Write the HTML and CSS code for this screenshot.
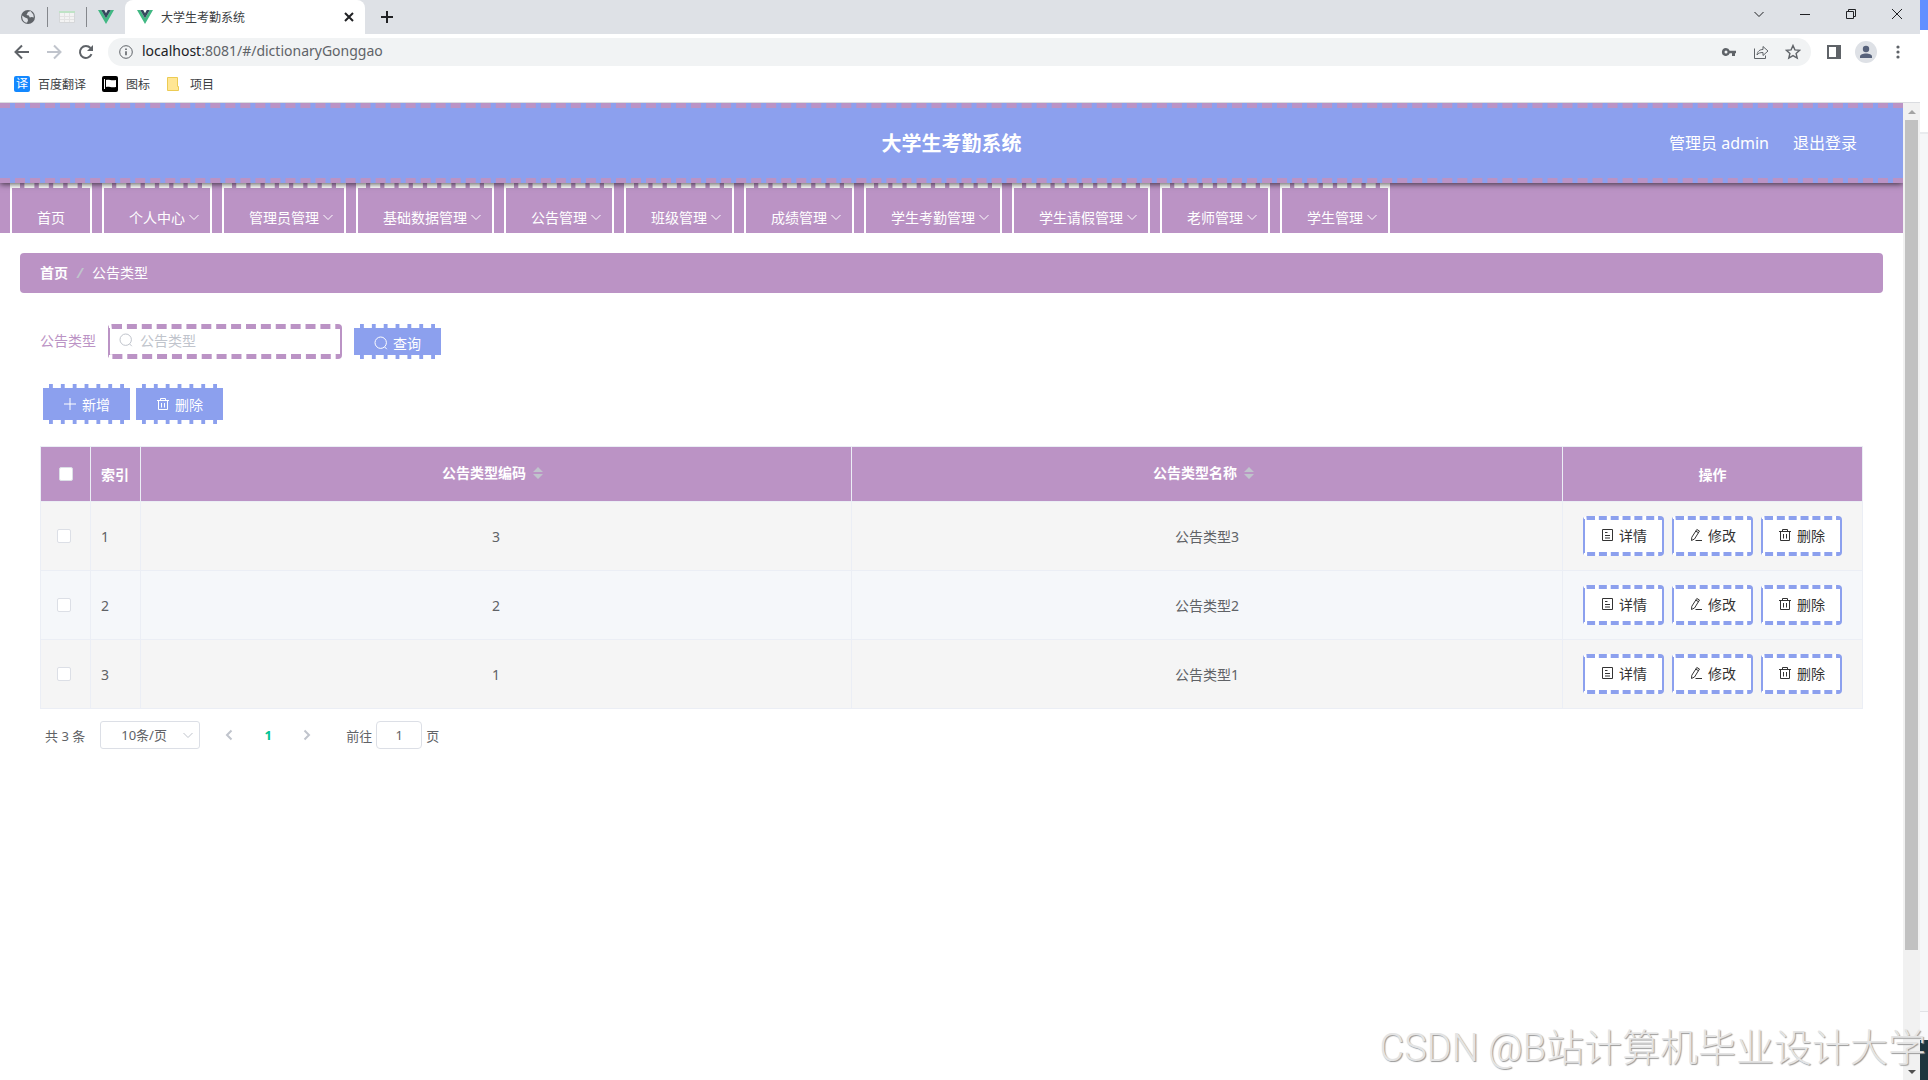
FILE: index.html
```
<!DOCTYPE html>
<html lang="zh-CN">
<head>
  <meta charset="UTF-8">
  <meta name="viewport" content="width=device-width, initial-scale=1.0">
  <title>大学生考勤系统</title>
  <link rel="stylesheet" href="styles.css">
</head>
<body>
  <!-- 图标 -->
  <svg class="symbols" aria-hidden="true">
    <symbol id="i-vue" viewBox="0 0 16 14">
      <path fill="#41b883" d="M0 0h3.2L8 8.3 12.8 0H16L8 14z"/>
      <path fill="#35495e" d="M3.2 0h3L8 3.2 9.8 0h3L8 8.3z"/>
    </symbol>
    <symbol id="i-down" viewBox="0 0 12 12"><path d="M1.5 4 6 8.5 10.5 4"/></symbol>
    <symbol id="i-left" viewBox="0 0 12 12"><path d="M8.500 1.500 4 6l4.500 4.500"/></symbol>
    <symbol id="i-right" viewBox="0 0 12 12"><path d="M3.500 1.500 8 6l-4.500 4.500"/></symbol>
    <symbol id="i-close" viewBox="0 0 12 12"><path d="M2 2l8 8M10 2l-8 8"/></symbol>
    <symbol id="i-search" viewBox="0 0 14 14"><circle cx="6.700" cy="6.700" r="5.700"/><path d="M10.600 10.900 12.800 13.200"/></symbol>
    <symbol id="i-plus" viewBox="0 0 14 14"><path d="M7 1v12M1 7h12"/></symbol>
    <symbol id="i-trash" viewBox="0 0 14 14"><path d="M1 3.500h12M4.500 3.500v-2h5v2M2.500 3.500v9h9v-9M5.500 6v4.500M8.500 6v4.500"/></symbol>
    <symbol id="i-doc" viewBox="0 0 14 14"><path d="M2.500 1.500h10v11h-10zM5 4.500h2.500M5 7.500h5M5 10h5"/></symbol>
    <symbol id="i-edit" viewBox="0 0 14 14"><path d="M7.800 1.500 10.500 3 5.500 11 2.500 12.500 2.800 9.300zM6.800 3.200 9.500 4.700M6.500 12.500h6.500"/></symbol>
  </svg>

  <div class="screen">
    <div class="browser">
      <!-- 标签栏 -->
      <div class="tab-strip">
        <svg class="tab-icon" viewBox="0 0 16 16"><circle cx="8" cy="8" r="7" fill="#5f6368"/><path fill="#dee1e6" d="M2.200 6.500 5 8.500l2.500 1 .5 2-1 2.300C4 13.500 2 11 2.200 6.500zM8 3l2.500-1 2.800 3.500.5 3-2-.5-2 .5-1-2-2.300-.5z"/></svg>
        <span class="tab-line"></span>
        <svg class="tab-icon" viewBox="0 0 16 16"><path fill="#f3f3f3" stroke="#d5d7d9" d="M.5 2.500h15v11H.5z"/><path fill="#bfe3c6" d="M0 2h16v2H0z"/><path stroke="#e3e3e3" d="M1 7.500h14M1 10.500h14M5.500 4v9M10.500 4v9"/></svg>
        <span class="tab-line"></span>
        <svg class="tab-icon"><use href="#i-vue"/></svg>
        <div class="tab">
          <svg class="tab-icon"><use href="#i-vue"/></svg>
          <span class="tab-title">大学生考勤系统</span>
          <button class="plain" aria-label="关闭标签"><svg class="line bold s12"><use href="#i-close"/></svg></button>
        </div>
        <button class="plain new-tab" aria-label="新标签"><svg class="line bold s14"><use href="#i-plus"/></svg></button>
        <div class="window-buttons">
          <button class="plain" aria-label="搜索标签"><svg class="line s12"><use href="#i-down"/></svg></button>
          <button class="plain" aria-label="最小化"><svg class="line s12" viewBox="0 0 12 12"><path d="M1 6.500h10"/></svg></button>
          <button class="plain" aria-label="还原"><svg class="line s12" viewBox="0 0 12 12"><path d="M1.500 3.500h7v7h-7zM3.500 3.500v-2h7v7h-2"/></svg></button>
          <button class="plain" aria-label="关闭"><svg class="line s12" viewBox="0 0 12 12"><path d="M1 1l10 10M11 1 1 11"/></svg></button>
        </div>
      </div>

      <!-- 地址栏 -->
      <div class="toolbar">
        <button class="plain" aria-label="后退"><svg class="line bold s16" viewBox="0 0 16 16"><path d="M15 8H2M8 1.500 1.500 8 8 14.500"/></svg></button>
        <button class="plain off" aria-label="前进"><svg class="line bold s16" viewBox="0 0 16 16"><path d="M1 8h13M8 1.500 14.500 8 8 14.500"/></svg></button>
        <button class="plain" aria-label="刷新"><svg class="line bold s16" viewBox="0 0 16 16"><path d="M13.500 10.200A6 6 0 1 1 12.500 4"/><path fill="currentColor" stroke="none" d="M15 1v6H9z"/></svg></button>
        <div class="address">
          <svg class="line s14" viewBox="0 0 14 14"><circle cx="7" cy="7" r="6.300"/><path stroke-width="1.600" d="M7 6.200v4M7 3.500v1.500"/></svg>
          <span class="url"><b>localhost</b>:8081/#/dictionaryGonggao</span>
          <button class="plain" aria-label="密码"><svg class="s16" viewBox="0 0 16 16"><path fill="currentColor" fill-rule="evenodd" d="M5 4a4 4 0 1 0 3.700 5.300H11V12h3V9.300h1V6.700H8.700A4 4 0 0 0 5 4zm0 2.500a1.500 1.500 0 1 1 0 3 1.500 1.500 0 0 1 0-3z"/></svg></button>
          <button class="plain" aria-label="分享"><svg class="line s16" viewBox="0 0 16 16"><path d="M1.500 4.500v10h11v-3M4 11c.5-4 3-5.500 6-5.500v-3l5 4.500-5 4.500v-3c-3 0-4.500.5-6 2.500z"/></svg></button>
          <button class="plain" aria-label="收藏"><svg class="line s16" viewBox="0 0 16 16"><path stroke-width="1.400" d="M8 1.500l1.900 4.400 4.800.4-3.600 3.100 1.100 4.700L8 11.600l-4.200 2.500 1.100-4.700L1.300 6.300l4.800-.4z"/></svg></button>
        </div>
        <div class="tools">
          <button class="plain" aria-label="侧边栏"><svg class="s14" viewBox="0 0 14 14"><path fill="currentColor" fill-rule="evenodd" d="M0 0h14v14H0zM2 2v10h7V2z"/></svg></button>
          <button class="plain avatar" aria-label="用户"><svg class="s14" viewBox="0 0 14 14"><circle cx="7" cy="4" r="3.200" fill="currentColor"/><path fill="currentColor" d="M1 13v-1.500C1 9.500 4 8.500 7 8.500s6 1 6 3V13z"/></svg></button>
          <button class="plain" aria-label="菜单"><svg class="s14" viewBox="0 0 14 14"><g fill="currentColor"><circle cx="7" cy="2" r="1.600"/><circle cx="7" cy="7" r="1.600"/><circle cx="7" cy="12" r="1.600"/></g></svg></button>
        </div>
      </div>

      <!-- 书签栏 -->
      <div class="bookmarks">
        <a href="#"><span class="bm-icon bm-blue">译</span>百度翻译</a>
        <a href="#"><svg class="s16" viewBox="0 0 16 16"><rect width="16" height="16" rx="2"/><path fill="#fff" d="M2 3h1v10H2zM4 4c3-1 5 1 10 0v7c-5 1-7-1-10 0z"/></svg>图标</a>
        <a href="#"><svg class="s16" viewBox="0 0 16 16"><path fill="#ffe694" stroke="#eccb53" d="M1.500 1.500h10v9h1v4h-11z"/></svg>项目</a>
      </div>

      <div class="viewport">
        <div class="page">
          <header class="header">
            <h1>大学生考勤系统</h1>
            <div class="user">
              <span>管理员 admin</span>
              <a href="#">退出登录</a>
            </div>
          </header>

          <nav class="menu">
            <a href="#" class="home">首页</a>
            <a href="#">个人中心<svg class="line s12"><use href="#i-down"/></svg></a>
            <a href="#">管理员管理<svg class="line s12"><use href="#i-down"/></svg></a>
            <a href="#">基础数据管理<svg class="line s12"><use href="#i-down"/></svg></a>
            <a href="#">公告管理<svg class="line s12"><use href="#i-down"/></svg></a>
            <a href="#">班级管理<svg class="line s12"><use href="#i-down"/></svg></a>
            <a href="#">成绩管理<svg class="line s12"><use href="#i-down"/></svg></a>
            <a href="#">学生考勤管理<svg class="line s12"><use href="#i-down"/></svg></a>
            <a href="#">学生请假管理<svg class="line s12"><use href="#i-down"/></svg></a>
            <a href="#">老师管理<svg class="line s12"><use href="#i-down"/></svg></a>
            <a href="#">学生管理<svg class="line s12"><use href="#i-down"/></svg></a>
          </nav>

          <main class="main">
            <div class="breadcrumb">
              <a href="#">首页</a><i>/</i><span>公告类型</span>
            </div>

            <div class="content">
              <form class="search">
                <label for="type">公告类型</label>
                <div class="search-box">
                  <svg class="line s14"><use href="#i-search"/></svg>
                  <input type="text" id="type" placeholder="公告类型">
                </div>
                <button type="button" class="btn btn-query"><svg class="line s14"><use href="#i-search"/></svg>查询</button>
              </form>

              <div class="actions">
                <button class="btn"><svg class="line s14"><use href="#i-plus"/></svg>新增</button>
                <button class="btn"><svg class="line s14"><use href="#i-trash"/></svg>删除</button>
              </div>

              <table class="table">
                <colgroup>
                  <col class="col-small"><col class="col-small"><col><col><col class="col-ops">
                </colgroup>
                <thead>
                  <tr>
                    <th><input type="checkbox" aria-label="全选"></th>
                    <th class="index">索引</th>
                    <th class="sortable">公告类型编码<svg class="caret" viewBox="0 0 10 12"><path d="M0 5l5-5 5 5zM0 7h10l-5 5z"/></svg></th>
                    <th class="sortable">公告类型名称<svg class="caret" viewBox="0 0 10 12"><path d="M0 5l5-5 5 5zM0 7h10l-5 5z"/></svg></th>
                    <th>操作</th>
                  </tr>
                </thead>
                <tbody>
                  <tr>
                    <td class="check"><input type="checkbox" aria-label="选择第1行"></td>
                    <td class="index">1</td>
                    <td>3</td>
                    <td>公告类型3</td>
                    <td>
                      <div class="ops">
                        <button><svg class="line s14"><use href="#i-doc"/></svg>详情</button>
                        <button><svg class="line s14"><use href="#i-edit"/></svg>修改</button>
                        <button><svg class="line s14"><use href="#i-trash"/></svg>删除</button>
                      </div>
                    </td>
                  </tr>
                  <tr>
                    <td class="check"><input type="checkbox" aria-label="选择第2行"></td>
                    <td class="index">2</td>
                    <td>2</td>
                    <td>公告类型2</td>
                    <td>
                      <div class="ops">
                        <button><svg class="line s14"><use href="#i-doc"/></svg>详情</button>
                        <button><svg class="line s14"><use href="#i-edit"/></svg>修改</button>
                        <button><svg class="line s14"><use href="#i-trash"/></svg>删除</button>
                      </div>
                    </td>
                  </tr>
                  <tr>
                    <td class="check"><input type="checkbox" aria-label="选择第3行"></td>
                    <td class="index">3</td>
                    <td>1</td>
                    <td>公告类型1</td>
                    <td>
                      <div class="ops">
                        <button><svg class="line s14"><use href="#i-doc"/></svg>详情</button>
                        <button><svg class="line s14"><use href="#i-edit"/></svg>修改</button>
                        <button><svg class="line s14"><use href="#i-trash"/></svg>删除</button>
                      </div>
                    </td>
                  </tr>
                </tbody>
              </table>

              <div class="pagination">
                <span class="total">共 3 条</span>
                <div class="page-size">
                  <select aria-label="每页条数">
                    <option>10条/页</option>
                    <option>20条/页</option>
                  </select>
                  <svg class="line s12"><use href="#i-down"/></svg>
                </div>
                <button class="pager off" aria-label="上一页"><svg class="line bold s12"><use href="#i-left"/></svg></button>
                <button class="pager current">1</button>
                <button class="pager off" aria-label="下一页"><svg class="line bold s12"><use href="#i-right"/></svg></button>
                <label class="jump" for="jump">前往</label>
                <input type="text" id="jump" value="1">
                <span>页</span>
              </div>
            </div>
          </main>
        </div>

        <!-- 滚动条 -->
        <div class="scrollbar">
          <svg viewBox="0 0 17 17"><path fill="#a3a3a3" d="M5 11l4-4 4 4z"/></svg>
          <div class="track"><div class="thumb"></div></div>
          <svg viewBox="0 0 17 17"><path fill="#505050" d="M5 7l4 4 4-4z"/></svg>
        </div>
      </div>
    </div>

    <!-- 后面的窗口 -->
    <div class="behind">
      <div class="behind-title"></div>
      <div class="behind-head"></div>
      <div class="behind-body"></div>
      <div class="behind-foot"></div>
      <div class="behind-desk"></div>
    </div>
    <div class="watermark">CSDN @B站计算机毕业设计大学</div>
  </div>
</body>
</html>
```
FILE: styles.css
```
* {
  box-sizing: border-box;
}
body {
  margin: 0;
  font-family: "Noto Sans", "Noto Sans CJK SC", sans-serif;
  font-size: 14px;
  color: #606266;
  background-color: #fff;
}
a {
  color: inherit;
  text-decoration: none;
}
button, input, select {
  font-family: inherit;
  font-size: inherit;
  color: inherit;
}
button {
  cursor: pointer;
}
svg {
  flex: none;
}
.symbols {
  display: none;
}
.line {
  fill: none;
  stroke: currentColor;
  stroke-width: 1;
}
.bold {
  stroke-width: 2;
}
.s12 {
  width: 12px;
  height: 12px;
}
.s14 {
  width: 14px;
  height: 14px;
}
.s16 {
  width: 16px;
  height: 16px;
}
.plain {
  display: flex;
  align-items: center;
  justify-content: center;
  padding: 0;
  border: none;
  background: none;
}
.screen {
  position: relative;
  display: flex;
  height: 100vh;
  overflow: hidden;
}
.browser {
  flex: 1;
  min-width: 0;
  display: flex;
  flex-direction: column;
}

/* 标签栏 */
.tab-strip {
  display: flex;
  align-items: center;
  gap: 11px;
  height: 34px;
  padding-left: 20px;
  background-color: #dee1e6;
  color: #202124;
}
.tab-icon {
  width: 16px;
  height: 16px;
}
.tab-line {
  width: 1px;
  height: 20px;
  background-color: #84878c;
}
.tab {
  display: flex;
  align-items: center;
  gap: 8px;
  width: 240px;
  height: 34px;
  padding: 0 10px 0 12px;
  border-radius: 8px 8px 0 0;
  background-color: #fff;
  font-size: 12px;
}
.tab-title {
  flex: 1;
  color: #3c4043;
}
.new-tab {
  margin-left: 4px;
}
.window-buttons {
  display: flex;
  align-self: flex-start;
  margin-left: auto;
}
.window-buttons .plain {
  width: 46px;
  height: 28px;
}

/* 地址栏 */
.toolbar {
  display: flex;
  align-items: center;
  gap: 16px;
  height: 36px;
  padding: 0 15px 0 14px;
  color: #5f6368;
}
.off {
  color: #c0c4cc;
}
.address {
  flex: 1;
  display: flex;
  align-items: center;
  gap: 16px;
  height: 28px;
  margin-left: -2px;
  padding: 0 10px 0 11px;
  border-radius: 14px;
  background-color: #f1f3f4;
}
.url {
  flex: 1;
  margin-left: -7px;
  line-height: 26px;
  padding-bottom: 2px;
}
.url b {
  font-weight: normal;
  color: #202124;
}
.tools {
  display: flex;
  align-items: center;
  gap: 14px;
}
.avatar {
  width: 22px;
  height: 22px;
  border-radius: 50%;
  background-color: #dee1e6;
  color: #56617a;
}

/* 书签栏 */
.bookmarks {
  display: flex;
  align-items: center;
  gap: 16px;
  height: 33px;
  padding: 0 14px 4px;
  border-bottom: 1px solid #dadce0;
  font-size: 12px;
  color: #3c4043;
}
.bookmarks a {
  display: flex;
  align-items: center;
  gap: 8px;
}
.bm-icon {
  width: 16px;
  height: 16px;
  border-radius: 2px;
  line-height: 16px;
  text-align: center;
  color: #fff;
}
.bm-blue {
  background-color: #1388ff;
}

/* 页面 */
.viewport {
  flex: 1;
  display: flex;
  min-height: 0;
}
.page {
  flex: 1;
  min-width: 0;
  overflow: hidden;
}
.header {
  position: relative;
  z-index: 1;
  display: grid;
  grid-template-columns: 1fr auto 1fr;
  align-items: center;
  height: 80px;
  padding: 0 46px 2px;
  border-top: 5px dashed #bb93c5;
  border-bottom: 5px dashed #bb93c5;
  background-color: #8ca0ee;
  box-shadow: 0 1px 6px rgba(0, 0, 0, 0.7);
  color: #fff;
}
.header h1 {
  grid-column: 2;
  margin: 0;
  font-size: 20px;
}
.user {
  display: flex;
  justify-content: flex-end;
  gap: 24px;
  font-size: 16px;
}
.menu {
  display: flex;
  gap: 10px;
  height: 50px;
  padding: 0 10px;
  overflow: hidden;
  background-color: #bb93c5;
  color: #fff;
}
.menu a {
  display: flex;
  align-items: center;
  gap: 3px;
  height: 65px;
  padding: 0 10px 0 25px;
  border: 2px solid #fff;
  border-top: 5px dashed #fff;
  white-space: nowrap;
}
.menu a.home {
  padding-right: 25px;
}
.main {
  padding: 20px;
}
.breadcrumb {
  display: flex;
  align-items: center;
  height: 40px;
  padding: 0 20px 2px;
  border-radius: 4px;
  background-color: #bb93c5;
  color: #fff;
}
.breadcrumb a {
  font-weight: bold;
}
.breadcrumb i {
  margin: 0 9px;
  font-weight: bold;
  color: #c0c4cc;
}
.content {
  padding: 30px 20px 0;
}
.search {
  display: flex;
  align-items: center;
  height: 36px;
}
.search label {
  margin-right: 12px;
  padding-bottom: 2px;
  color: #bb93c5;
}
.search-box {
  display: flex;
  align-items: center;
  gap: 7px;
  width: 234px;
  height: 35px;
  margin-right: 10px;
  padding: 0 9px 2px;
  border: 2px solid #bb93c5;
  border-top: 5px dashed #bb93c5;
  border-bottom: 5px dashed #bb93c5;
  border-radius: 4px;
  color: #c0c4cc;
}
.search-box input {
  flex: 1;
  min-width: 0;
  padding: 0;
  border: none;
  outline: none;
  background: none;
  color: #606266;
}
.search-box input::placeholder {
  color: #c0c4cc;
}
.btn {
  display: flex;
  align-items: center;
  gap: 5px;
  height: 40px;
  padding: 0 20px;
  border: 2px solid #fff;
  border-top: 4px dashed #fff;
  border-bottom: 4px dashed #fff;
  background-color: #8ca0ee;
  color: #fff;
}
.btn-query {
  height: 35px;
  padding-top: 4px;
}
.actions {
  display: flex;
  gap: 2px;
  margin: 25px 0 22px 1px;
}

/* 表格 */
.table {
  width: 100%;
  table-layout: fixed;
  border-collapse: collapse;
  text-align: center;
}
.col-small {
  width: 50px;
}
.col-ops {
  width: 300px;
}
.table th, .table td {
  padding: 0;
  border: 1px solid #ebeef5;
}
.table th {
  height: 55px;
  background-color: #bb93c5;
  color: #fff;
}
.table th.sortable {
  padding-bottom: 4px;
}
.table td {
  height: 69px;
  background-color: #f5f5f5;
}
.table tr:nth-child(even) td {
  background-color: #f5f7fa;
}
.table .index {
  padding-left: 10px;
  text-align: left;
}
.table .check {
  padding-right: 4px;
}
.table input {
  appearance: none;
  display: block;
  width: 14px;
  height: 14px;
  margin: 0 auto;
  border: 1px solid #dcdfe6;
  border-radius: 2px;
  background-color: #fff;
}
.caret {
  width: 10px;
  height: 12px;
  margin: 0 7px;
  vertical-align: -1px;
  fill: #c0c4cc;
}
.ops {
  display: flex;
  justify-content: center;
  gap: 8px;
}
.ops button {
  display: flex;
  align-items: center;
  gap: 5px;
  height: 40px;
  padding: 0 15px 2px;
  border: 2px solid #8ca0ee;
  border-top: 4px dashed #8ca0ee;
  border-bottom: 4px dashed #8ca0ee;
  border-radius: 4px;
  background-color: #fff;
  color: #333;
}

/* 分页 */
.pagination {
  display: flex;
  align-items: center;
  height: 28px;
  margin-top: 12px;
  padding-left: 5px;
  font-size: 13px;
}
.total {
  margin-right: 15px;
}
.page-size {
  position: relative;
  width: 100px;
  margin-right: 14px;
}
.page-size select {
  appearance: none;
  display: block;
  width: 100%;
  height: 28px;
  padding: 0 20px;
  border: 1px solid #dcdfe6;
  border-radius: 3px;
  background-color: #fff;
}
.page-size svg {
  position: absolute;
  top: 8px;
  right: 6px;
  color: #c0c4cc;
}
.pager {
  display: flex;
  align-items: center;
  justify-content: center;
  width: 30px;
  height: 28px;
  margin-right: 9px;
  padding: 0;
  border: none;
  background: none;
}
.current {
  font-weight: bold;
  color: #00c292;
}
.jump {
  margin: 0 4px 0 15px;
}
#jump {
  width: 46px;
  height: 28px;
  margin-right: 4px;
  padding: 0;
  border: 1px solid #dcdfe6;
  border-radius: 4px;
  text-align: center;
}

/* 滚动条 */
.scrollbar {
  display: flex;
  flex-direction: column;
  width: 17px;
  background-color: #f1f1f1;
}
.track {
  flex: 1;
  padding: 0 2px;
}
.thumb {
  height: 88%;
  background-color: #c1c1c1;
}

.behind {
  display: flex;
  flex-direction: column;
  width: 8px;
}
.behind-title {
  height: 30px;
  background-color: #628fff;
}
.behind-head {
  height: 102px;
}
.behind-body {
  flex: 1;
  border-top: 2px solid #e9ebee;
  border-bottom: 1px solid #e0e2e6;
  background-color: #f5f6f8;
}
.behind-foot {
  height: 28px;
  background-color: #f8f9fb;
}
.behind-desk {
  height: 40px;
  background-color: #1e353e;
}
.watermark {
  position: absolute;
  right: 2px;
  bottom: 8px;
  font-family: Roboto, "Noto Sans CJK SC", sans-serif;
  font-size: 38px;
  font-weight: 300;
  white-space: nowrap;
  color: #e4e4e4;
  text-shadow: 1px 1px 1px #999;
}
```
